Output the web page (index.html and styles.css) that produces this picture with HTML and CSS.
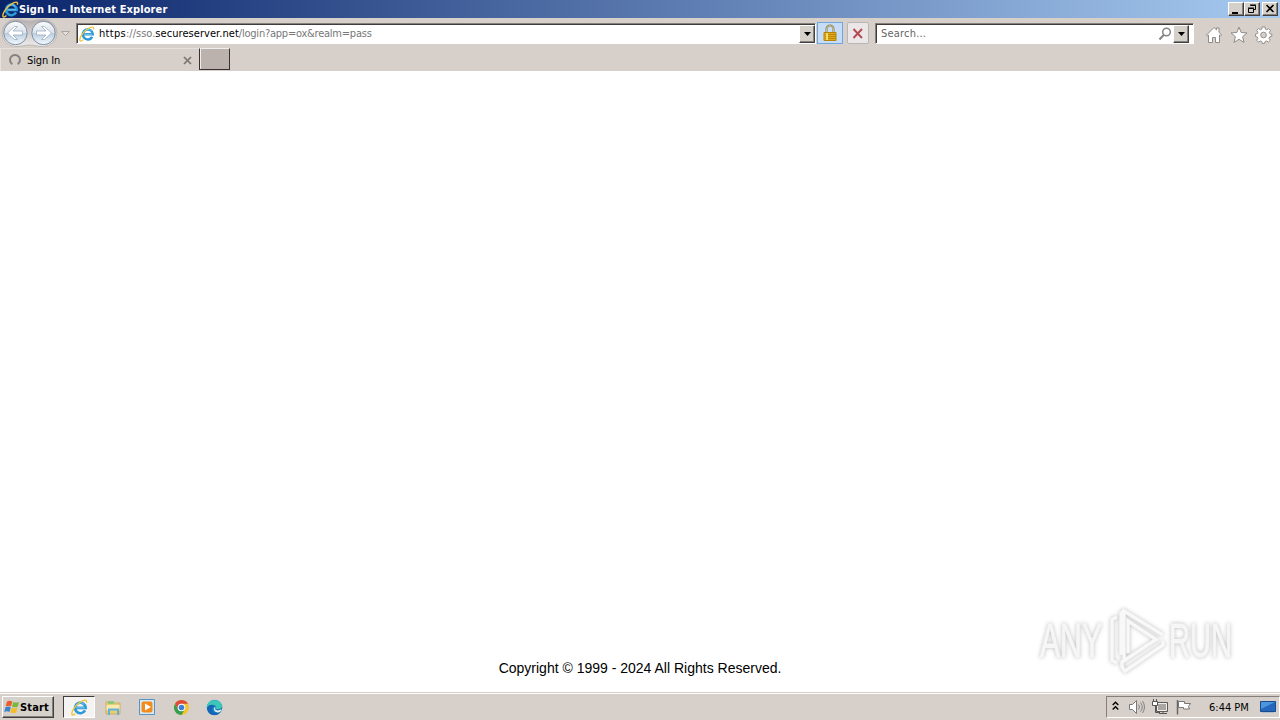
FILE: index.html
```html
<!DOCTYPE html>
<html lang="en">
<head>
  <meta charset="UTF-8">
  <title>Sign In</title>
  <link rel="stylesheet" href="styles.css">
</head>
<body>
  <!-- shared icons -->
  <svg class="defs" width="0" height="0">
    <defs>
      <linearGradient id="ball" x1="0" y1="0" x2="0" y2="1">
        <stop offset="0" stop-color="#fafbfc"/>
        <stop offset=".48" stop-color="#dce3ea"/>
        <stop offset=".52" stop-color="#bdcedf"/>
        <stop offset="1" stop-color="#f3faff"/>
      </linearGradient>
      <linearGradient id="panel" x1="0" y1="0" x2="0" y2="1">
        <stop offset="0" stop-color="#b5b0af"/>
        <stop offset="1" stop-color="#eeebea"/>
      </linearGradient>
      <linearGradient id="edge" x1="0" y1="0" x2="1" y2="1">
        <stop offset="0" stop-color="#36c4e0"/>
        <stop offset="1" stop-color="#0b58a8"/>
      </linearGradient>
      <symbol id="ie" viewBox="0 0 16 16">
        <path d="M13.200 10.800a5 5 0 1 1 .6-2.500H5" fill="none" stroke="#2b98d8" stroke-width="2.500"/>
        <path d="M4.500 6a5 5 0 0 1 8-1M5 8.300h8" fill="none" stroke="#7fcdf3" stroke-width=".9"/>
        <path d="M4.200 13.600C2.400 15.400.7 15.700.8 13.600 1 10 6.400 3.400 11.200 1.500c2.800-1.100 3.900-.2 3.200 2" fill="none" stroke="#efc53a" stroke-width="1.300"/>
      </symbol>
    </defs>
  </svg>

  <div class="titlebar">
    <svg width="17" height="17"><use href="#ie"/></svg>
    <span class="title">Sign In - Internet Explorer</span>
    <div class="window-buttons">
      <button class="wbtn"><svg width="14" height="12"><path d="M3 9h6v2H3z"/></svg></button>
      <button class="wbtn"><svg width="14" height="12"><path d="M5.500 2.500h5v4h-2M5 2h6M3.500 5.500h5v4h-5zM3 5h6" fill="none" stroke="#000"/></svg></button>
      <button class="wbtn close"><svg width="14" height="12"><path d="M3.500 2l7 7M10.500 2l-7 7" stroke="#000" stroke-width="1.600"/></svg></button>
    </div>
  </div>

  <div class="toolbar">
    <svg width="76" height="30">
      <path d="M15.500 1.500C22 1.500 24 3 29.500 3S37 1.500 43.500 1.500a13.500 13.500 0 0 1 0 27C37 28.500 34 27 29.500 27s-7.500 1.500-14 1.500a13.500 13.500 0 0 1 0-27z" fill="url(#panel)" stroke="#bdb8b6"/>
      <circle cx="15.500" cy="15" r="11.700" fill="url(#ball)" stroke="#7f90a3"/>
      <circle cx="43.500" cy="15" r="11.700" fill="url(#ball)" stroke="#7f90a3"/>
      <path d="M7.500 15l7-6.500h3L13 13h9.500v4H13l4.500 4.500h-3z" fill="#fff" stroke="#8ea6be" stroke-width=".7"/>
      <path d="M51.500 15l-7-6.500h-3L46 13h-9.500v4H46l-4.500 4.500h3z" fill="#fff" stroke="#8ea6be" stroke-width=".7"/>
      <path d="M61.500 13.500h8l-4 4z" fill="#e6e1de" stroke="#aaa5a2"/>
    </svg>
    <div class="field address">
      <svg width="16" height="16"><use href="#ie"/></svg>
      <span class="url"><span class="proto">https</span><span class="sub">://sso.</span><span class="host">secureserver.net</span><span class="path">/login?app=ox&amp;realm=pass</span></span>
      <button class="drop"><svg width="7" height="4"><path d="M0 0h7L3.500 4z"/></svg></button>
    </div>
    <div class="lock">
      <svg width="16" height="18">
        <path d="M4.500 9V5a3.500 3.500 0 0 1 7 0v4" fill="none" stroke="#8b7b4c" stroke-width="2"/>
        <path d="M4.500 9V5a3.500 3.500 0 0 1 7 0v4" fill="none" stroke="#e2d6a0" stroke-width=".7"/>
        <path d="M2 8.500h12v8H2z" fill="#e0ab18" stroke="#b88109"/>
        <path d="M3 10.500h11M3 12.500h11M3 14.500h11" stroke="#bd850b"/>
        <path d="M5 9v7" stroke="#f8d865" stroke-width="2"/>
      </svg>
    </div>
    <div class="stop">
      <svg width="12" height="12"><path d="M1.500 1l8.500 9M10 1l-8.500 9" stroke="#b34a50" stroke-width="1.900"/></svg>
    </div>
    <div class="field search">
      <span class="placeholder">Search...</span>
      <svg class="glass" width="14" height="14"><circle cx="8.500" cy="5" r="3.800" fill="#fff" stroke="#858585" stroke-width="1.500"/><path d="M5.700 8L1.500 12.500" stroke="#858585" stroke-width="2"/></svg>
      <button class="drop"><svg width="7" height="4"><path d="M0 0h7L3.500 4z"/></svg></button>
    </div>
    <div class="tools">
      <svg width="18" height="18"><path d="M1.500 9L9 1.500l2.500 2.300V2H14v4.200L16.500 9l-1 1-1-.9v7.400h-4v-5h-3v5h-4V9.100l-1 .9z" fill="#fff" stroke="#8f8b88"/></svg>
      <svg width="18" height="18"><path d="M9 1.200l2.200 5.300 5.800.4-4.400 3.800 1.400 5.700L9 13.300l-5 3.100 1.400-5.700L1 6.900l5.800-.4z" fill="#fff" stroke="#8f8b88"/></svg>
      <svg width="18" height="18" viewBox="0 0 19 19">
        <path d="M7.500 1h3l.4 2.300 1.500.7 2-1.300 2 2-1.300 2 .6 1.500 2 .3v2.500l-2.200.5-.7 1.500 1.300 2-2 2-2-1.200-1.500.6-.5 2.100H7.700l-.5-2.100-1.500-.6-2 1.200-2-2L3 13l-.7-1.500L.5 11V8.500l1.900-.4.7-1.500-1.300-2 2-2 2 1.300 1.400-.6z" fill="#fff" stroke="#8f8b88"/>
        <circle cx="9" cy="9.500" r="3" fill="#d6cfca" stroke="#8f8b88"/>
      </svg>
    </div>
  </div>

  <div class="tabs">
    <div class="tab">
      <svg width="14" height="14"><path d="M4.300 11.200a5 5 0 1 1 5.400 0" fill="none" stroke="#858180" stroke-width="2"/></svg>
      <span class="tab-title">Sign In</span>
      <svg class="tab-close" width="9" height="9"><path d="M1 1l7 7M8 1L1 8" stroke="#7b7674" stroke-width="1.700"/></svg>
    </div>
    <div class="new-tab"></div>
  </div>

  <div class="page">
    <p class="copyright">Copyright © 1999 - 2024 All Rights Reserved.</p>
    <svg class="watermark" width="210" height="76" viewBox="0 0 210 76">
      <g class="mark">
        <text class="mark-text" x="9" y="51" textLength="62" lengthAdjust="spacingAndGlyphs">ANY</text>
        <path d="M86 11l-5 2.500v41l5 2.500M93 56V5l39 24M93 5l-3 2v42M97 47V15l28 18.500L91 56v5l3 4 38-26v-4"/>
        <text class="mark-text" x="138" y="51" textLength="63" lengthAdjust="spacingAndGlyphs">RUN</text>
      </g>
    </svg>
  </div>

  <div class="taskbar">
    <button class="start">
      <svg width="17" height="16">
        <path d="M3 2.500c2-1.200 3.500-1 5.300 0L7 7.300c-2-.9-3.500-.8-5.300 0z" fill="#ed5b28"/>
        <path d="M9.200 3c2 .8 3.600.8 5.800 0l-1.300 4.700c-2 .9-3.600.8-5.700 0z" fill="#79b83a"/>
        <path d="M1.500 8.200c2-1 3.500-.9 5.300 0l-1.300 4.700c-1.800-1-3.500-.9-5.300 0z" fill="#3c83ce"/>
        <path d="M7.700 8.700c2 .8 3.600.8 5.800 0L12.200 13.400c-2 .9-3.600.8-5.800 0z" fill="#f5bd25"/>
      </svg>
      <span class="start-label">Start</span>
    </button>
    <div class="task active"><svg width="17" height="17"><use href="#ie"/></svg></div>
    <div class="task">
      <svg width="17" height="17">
        <path d="M1 3h4l1 1h9v11H1z" fill="#e6cd76" stroke="#c5a84d" stroke-width=".7"/>
        <path d="M3 2h6v3H3z" fill="#8fc77d"/><path d="M1.500 6h13v5h-13z" fill="#f8e9ae"/>
        <path d="M4 16v-5.500h9V16" fill="none" stroke="#62b2dc" stroke-width="2"/>
      </svg>
    </div>
    <div class="task">
      <svg width="17" height="17"><path d="M.5.500h15v15H.5z" fill="#d7e9f5" stroke="#5794c2"/><rect x="2.500" y="2.500" width="11" height="11" rx="2" fill="#f28b1b"/><path d="M6 4.500l6 3.500-6 3.500z" fill="#fff"/></svg>
    </div>
    <div class="task">
      <svg width="17" height="17">
        <circle cx="8.500" cy="8.500" r="7.500" fill="#f5c52c"/>
        <path d="M2 4.750A7.500 7.500 0 0 1 15 4.750H8.500L5.250 10.400z" fill="#dd4b3a"/>
        <path d="M2 4.750A7.500 7.500 0 0 0 8.500 16l3.300-5.600H5.250z" fill="#3a9d50"/>
        <circle cx="8.500" cy="8.500" r="3.800" fill="#fff"/><circle cx="8.500" cy="8.500" r="2.800" fill="#3d7edb"/>
      </svg>
    </div>
    <div class="task">
      <svg width="17" height="17">
        <circle cx="8.500" cy="8.500" r="7.800" fill="url(#edge)"/>
        <path d="M1 7C2 1.500 12-1.500 15.500 5c1 2.300.5 5-2.500 5H9.500c1.500-2 .5-4-2-4.200C4.500 5.500 2 6.500 1 9z" fill="#3bc6b8"/>
        <path d="M1 9c1.500-4 7-4 7.800-1.200C7 8 6 9 6.500 11c.6 2.500 3.500 3.500 7 2.500-4 4.500-12 3-12.500-4.500z" fill="#1465b5"/>
        <path d="M9 8c1 .8-.5 2 .5 2.800 1.500 1 4.500.8 6-.8-.2 2-1.500 3.500-3.500 3.500-4 0-5-4-3-5.500z" fill="#e3f1f4"/>
      </svg>
    </div>
    <div class="tray">
      <svg class="chevrons" width="7" height="10"><path d="M.7 4l2.800-2.800L6.300 4M.7 8.500l2.800-2.800 2.800 2.800" fill="none" stroke="#000" stroke-width="1.400"/></svg>
      <svg class="volume" width="18" height="16"><path d="M1.500 5.500h3l4-4v13l-4-4h-3z" fill="#fff" stroke="#777"/><path d="M10.500 5.500q2 2.500 0 5M12.500 3.500q3.500 4.500 0 9M14.500 2q4 6 0 12" fill="none" stroke="#858280"/></svg>
      <svg class="network" width="17" height="16"><path d="M4.500 3.500h11v9h-11z" fill="#aaa6a2" stroke="#5d5a58"/><path d="M5.500 4.500h9v7h-9z" fill="none" stroke="#eee"/><path d="M3.500 6v7.500H8M7 14.500h8M11 13v1" fill="none" stroke="#555"/><path d="M.5 2.500h5v4h-5z" fill="#fff" stroke="#555"/><path d="M1.500 0v2M4.500 0v2" stroke="#555"/></svg>
      <svg class="flag" width="17" height="16"><path d="M2.500 1v14.500" stroke="#666" stroke-width="1.500"/><path d="M3.500 2.500h6v2h6l-2 3 1 2.500H8.500V8.500h-5z" fill="#fff" stroke="#777"/></svg>
      <span class="clock">6:44 PM</span>
      <svg class="desktop" width="16" height="13"><path d="M.5.5h15v10H.5z" fill="#2368bd" stroke="#174b8b"/><path d="M1 1h14L1 8z" fill="#4d96dd"/><path d="M2 11.500h12" stroke="#a8bdd1"/></svg>
    </div>
  </div>
</body>
</html>
```

FILE: styles.css
```css
* {
  box-sizing: border-box;
}
body {
  margin: 0;
  height: 720px;
  display: flex;
  flex-direction: column;
  overflow: hidden;
  background: #fff;
  color: #000;
  font-family: "DejaVu Sans Condensed", "DejaVu Sans", sans-serif;
  font-stretch: condensed;
  font-size: 11px;
}
svg {
  display: block;
  flex: none;
}
.defs {
  position: absolute;
}
button {
  padding: 0;
  font: inherit;
  color: #000;
  background: #d6d0ca;
  border: 1px solid;
  border-color: #fff #404040 #404040 #fff;
  box-shadow: inset -1px -1px #85807c;
}
span {
  white-space: nowrap;
}

/* title bar */
.titlebar {
  flex: none;
  height: 18px;
  display: flex;
  align-items: center;
  padding: 0 2px;
  background: linear-gradient(90deg, #0a246a, #a6caf0);
}
.title {
  color: #fff;
  font-weight: bold;
  letter-spacing: .1px;
}
.window-buttons {
  display: flex;
  margin-left: auto;
}
.wbtn {
  width: 16px;
  height: 14px;
}
.close {
  margin-left: 2px;
}

/* address row */
.toolbar {
  flex: none;
  height: 30px;
  display: flex;
  background: #d6cfca;
}
.field {
  height: 21px;
  margin-top: 5px;
  display: flex;
  align-items: center;
  background: #fff;
  border: 1px solid;
  border-color: #85807c #fff #fff #85807c;
  box-shadow: inset 1px 1px #403c3b;
}
.address {
  width: 740px;
  padding-left: 2px;
}
.url {
  margin-left: 4px;
  display: flex;
}
.sub, .path {
  color: #777;
}
.proto {
  letter-spacing: .3px;
}
.host {
  letter-spacing: .06px;
}
.path {
  letter-spacing: -.23px;
}
.drop {
  width: 16px;
  height: 18px;
  margin: 0 0 0 auto;
  display: flex;
  align-items: center;
  justify-content: center;
}
.lock {
  width: 26px;
  height: 22px;
  margin: 4px 0 0 1px;
  padding: 1px 4px;
  background: #c5ddf6;
  border: 1px solid #70a6df;
}
.stop {
  width: 22px;
  height: 22px;
  margin: 4px 0 0 4px;
  padding: 5px 4px;
  background: #ebe7e9;
  border: 1px solid #bbb6b6;
  border-radius: 2px;
}
.search {
  width: 319px;
  margin-left: 6px;
  padding: 0 4px 0 5px;
}
.placeholder {
  color: #666;
  letter-spacing: .2px;
}
.glass {
  margin-left: auto;
}
.search .drop {
  margin-left: 1px;
}
.tools {
  display: flex;
  gap: 7px;
  margin: 8px 0 0 11px;
}

/* tabs */
.tabs {
  flex: none;
  height: 23px;
  display: flex;
  background: #d6cfca;
}
.tab {
  width: 199px;
  display: flex;
  align-items: center;
  padding: 0 7px 0 7px;
  border-top: 1px solid #e6e1de;
  border-left: 1px solid #e6e1de;
}
.tab-title {
  margin-left: 5px;
  letter-spacing: -.1px;
}
.tab-close {
  margin-left: auto;
}
.new-tab {
  width: 31px;
  height: 22px;
  background: #bbb2ae;
  border: 1px solid #39312f;
  border-top-color: #eee;
  box-shadow: inset 1px 0 #eee;
}

/* page */
.page {
  flex: 1;
  display: flex;
  flex-direction: column;
  justify-content: flex-end;
  align-items: center;
  position: relative;
}
.copyright {
  margin: 0 0 15px;
  font: 14px/18px "Liberation Sans", Arial, sans-serif;
}
.watermark {
  position: absolute;
  right: 39px;
  bottom: 10px;
  filter: drop-shadow(0 0 2px #bbb);
}
.mark {
  fill: #f6f6f6;
}
.mark path {
  fill: none;
  stroke: #f8f8f8;
  stroke-width: 3.5;
}
.mark-text {
  font: 49px "Liberation Sans", Arial, sans-serif;
  stroke: #f6f6f6;
}

/* taskbar */
.taskbar {
  flex: none;
  height: 28px;
  display: flex;
  align-items: center;
  padding: 1px 2px 0;
  background: #d6cfca;
  border-top: 1px solid #d6cfca;
  box-shadow: inset 0 1px #fff;
}
.start {
  width: 52px;
  height: 22px;
  display: flex;
  align-items: center;
  padding-left: 1px;
  font-weight: bold;
}
.start-label {
  margin-left: -1px;
  letter-spacing: .15px;
}
.task {
  width: 32px;
  height: 22px;
  margin-right: 2px;
  display: flex;
  align-items: center;
  justify-content: center;
}
.active {
  margin-left: 9px;
  background: #f5f3f1;
  border: 1px solid;
  border-color: #403c3b #fff #fff #403c3b;
}
.task:nth-child(6) {
  padding-right: 1px;
}
.tray {
  width: 174px;
  height: 22px;
  margin-left: auto;
  margin-right: -2px;
  display: flex;
  align-items: center;
  padding-left: 5px;
  border: 1px solid;
  border-color: #85807c #fff #fff #85807c;
}
.chevrons {
  margin-bottom: 2px;
}
.volume {
  margin-left: 9px;
}
.network {
  margin-left: 6px;
}
.flag {
  margin-left: 6px;
}
.clock {
  margin-left: 17px;
}
.desktop {
  margin-left: auto;
  margin-right: 3px;
}
```
